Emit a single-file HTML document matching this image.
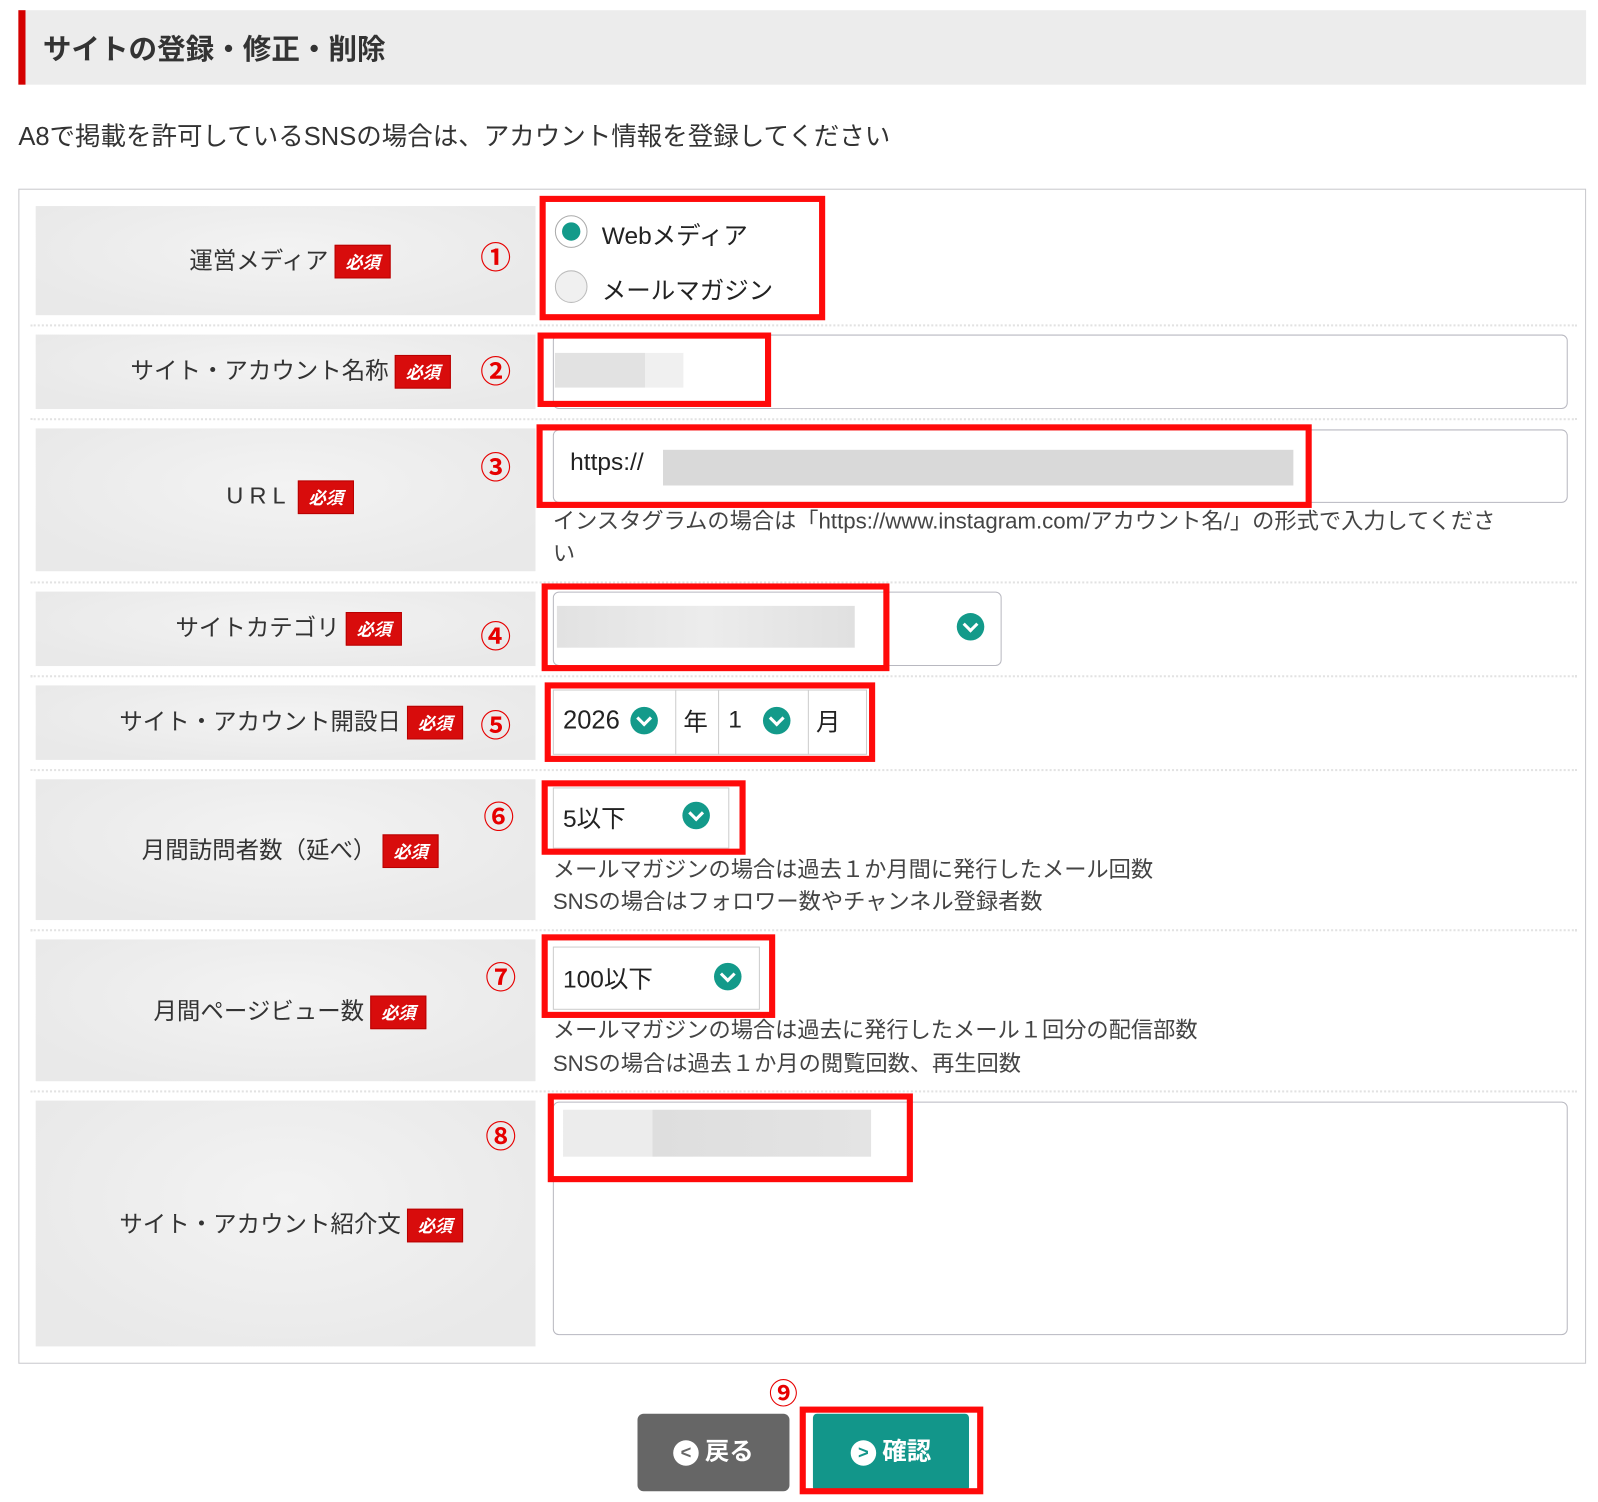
<!DOCTYPE html>
<html><head><meta charset="utf-8"><style>
*{margin:0;padding:0;box-sizing:border-box}
body{width:1598px;height:1502px;background:#fff;overflow:hidden;font-family:"Liberation Sans","Noto Sans CJK JP",sans-serif;color:#333}
#w{position:absolute;left:0;top:0;width:1567px;height:1473px;transform:scale(1.02);transform-origin:0 0}
.a{position:absolute}
.lab{position:absolute;left:35px;width:490px;background:radial-gradient(ellipse at 50% 40%,#f3f3f3,#e9e9e9 80%)}
.lt{position:absolute;font-size:23px;color:#333;white-space:nowrap}
.badge{display:inline-block;background:#d80c0c;color:#fff;font-size:17px;font-weight:bold;font-style:italic;width:55px;height:33px;line-height:33px;text-align:center;vertical-align:middle;margin-left:6px;border:1px solid #b80000}
.num{position:absolute;color:#e60000;font-size:30px;font-weight:bold;left:471px}
.sep{position:absolute;left:30px;width:1516px;border-top:2px dotted #e2e2e2}
.red{position:absolute;border:6px solid #ff0a0a}
.inp{position:absolute;border:1px solid #b8b8c0;border-radius:6px;background:#fff}
.blur{position:absolute;background:#dcdcdc}
.chev{position:absolute;width:27px;height:27px;border-radius:50%;background:#139a8a}
.chev:after{content:"";position:absolute;left:8px;top:6px;width:8px;height:8px;border-right:3px solid #fff;border-bottom:3px solid #fff;transform:rotate(45deg)}
.help{position:absolute;left:542px;font-size:21.8px;color:#444;white-space:nowrap}
.v{position:absolute;font-size:24px;color:#222}
</style></head><body><div id="w">
<div class="a" style="left:18px;top:10px;width:1537px;height:73px;background:#ececec"></div>
<div class="a" style="left:18px;top:10px;width:7px;height:73px;background:#d40000"></div>
<div class="a" style="left:42px;top:27px;font-size:28px;font-weight:bold;color:#333">サイトの登録・修正・削除</div>
<div class="a" style="left:18px;top:114px;font-size:25px;color:#333">A8で掲載を許可しているSNSの場合は、アカウント情報を登録してください</div>
<div class="a" style="left:18px;top:185px;width:1537px;height:1152px;border:1px solid #c8c8cc"></div>

<div class="lab" style="top:202px;height:107px"></div>
<div class="lab" style="top:328px;height:73px"></div>
<div class="lab" style="top:420px;height:140px"></div>
<div class="lab" style="top:580px;height:73px"></div>
<div class="lab" style="top:672px;height:73px"></div>
<div class="lab" style="top:764px;height:138px"></div>
<div class="lab" style="top:921px;height:139px"></div>
<div class="lab" style="top:1079px;height:241px"></div>
<div class="sep" style="top:318px"></div><div class="sep" style="top:410px"></div><div class="sep" style="top:570px"></div><div class="sep" style="top:662px"></div><div class="sep" style="top:754px"></div><div class="sep" style="top:911px"></div><div class="sep" style="top:1069px"></div>

<div class="lt" style="right:1184px;top:236px">運営メディア<span class="badge">必須</span></div>
<div class="lt" style="right:1125px;top:344px">サイト・アカウント名称<span class="badge">必須</span></div>
<div class="lt" style="right:1220px;top:471px;letter-spacing:6px">URL<span class="badge" style="letter-spacing:0">必須</span></div>
<div class="lt" style="right:1173px;top:596px">サイトカテゴリ<span class="badge">必須</span></div>
<div class="lt" style="right:1113px;top:688px">サイト・アカウント開設日<span class="badge">必須</span></div>
<div class="lt" style="right:1137px;top:814px">月間訪問者数（延べ）<span class="badge">必須</span></div>
<div class="lt" style="right:1149px;top:972px">月間ページビュー数<span class="badge">必須</span></div>
<div class="lt" style="right:1113px;top:1181px">サイト・アカウント紹介文<span class="badge">必須</span></div>

<div class="num" style="top:228px">①</div><div class="num" style="top:340px">②</div><div class="num" style="top:434px">③</div><div class="num" style="top:600px">④</div><div class="num" style="top:687px">⑤</div><div class="num" style="top:777px;left:474px">⑥</div><div class="num" style="top:934px;left:476px">⑦</div><div class="num" style="top:1090px;left:476px">⑧</div>

<div class="a" style="left:544px;top:211px;width:32px;height:32px;border-radius:50%;border:1px solid #aaa;background:#fff"><div class="a" style="left:6px;top:6px;width:18px;height:18px;border-radius:50%;background:#139a8a"></div></div>
<div class="a" style="left:544px;top:265px;width:32px;height:32px;border-radius:50%;border:1px solid #bbb;background:#f0f0f0"></div>
<div class="v" style="left:590px;top:211px">Webメディア</div>
<div class="v" style="left:590px;top:265px">メールマガジン</div>

<div class="inp" style="left:542px;top:328px;width:995px;height:73px"></div>
<div class="blur" style="left:544px;top:346px;width:126px;height:34px;background:linear-gradient(90deg,#e2e2e2 70%,#f0f0f0 70%)"></div>
<div class="inp" style="left:542px;top:421px;width:995px;height:72px"></div>
<div class="v" style="left:559px;top:440px">https://</div>
<div class="blur" style="left:650px;top:441px;width:618px;height:35px;background:#d9d9d9"></div>
<div class="help" style="top:494px">インスタグラムの場合は「https://www.instagram.com/アカウント名/」の形式で入力してくださ</div>
<div class="help" style="top:526px">い</div>

<div class="inp" style="left:542px;top:580px;width:440px;height:73px"></div>
<div class="blur" style="left:546px;top:594px;width:292px;height:41px;background:linear-gradient(90deg,#e2e2e2,#ececec 50%,#e0e0e0)"></div>
<div class="chev" style="left:938px;top:601px"></div>

<div class="a" style="left:542px;top:676px;width:308px;height:64px;border:1px solid #ccc"></div>
<div class="a" style="left:662px;top:676px;height:64px;border-left:1px solid #ccc"></div>
<div class="a" style="left:704px;top:676px;height:64px;border-left:1px solid #ccc"></div>
<div class="a" style="left:792px;top:676px;height:64px;border-left:1px solid #ccc"></div>
<div class="v" style="left:552px;top:692px;font-size:25px">2026</div><div class="chev" style="left:618px;top:693px"></div>
<div class="v" style="left:670px;top:688px">年</div>
<div class="v" style="left:714px;top:692px">1</div><div class="chev" style="left:748px;top:693px"></div>
<div class="v" style="left:800px;top:688px">月</div>

<div class="a" style="left:542px;top:772px;width:173px;height:60px;border:1px solid #ccc"></div>
<div class="v" style="left:552px;top:783px">5以下</div><div class="chev" style="left:669px;top:786px"></div>
<div class="help" style="top:836px">メールマガジンの場合は過去１か月間に発行したメール回数</div>
<div class="help" style="top:867px">SNSの場合はフォロワー数やチャンネル登録者数</div>

<div class="a" style="left:542px;top:928px;width:203px;height:62px;border:1px solid #ccc"></div>
<div class="v" style="left:552px;top:940px">100以下</div><div class="chev" style="left:700px;top:944px"></div>
<div class="help" style="top:993px">メールマガジンの場合は過去に発行したメール１回分の配信部数</div>
<div class="help" style="top:1026px">SNSの場合は過去１か月の閲覧回数、再生回数</div>

<div class="inp" style="left:542px;top:1080px;width:995px;height:229px"></div>
<div class="blur" style="left:552px;top:1088px;width:302px;height:46px;background:linear-gradient(90deg,#ececec 29%,#dedede 29%,#e4e4e4)"></div>

<div class="red" style="left:529px;top:192px;width:280px;height:122px"></div>
<div class="red" style="left:527px;top:326px;width:229px;height:73px"></div>
<div class="red" style="left:526px;top:416px;width:760px;height:82px"></div>
<div class="red" style="left:531px;top:572px;width:341px;height:86px"></div>
<div class="red" style="left:534px;top:669px;width:324px;height:78px"></div>
<div class="red" style="left:531px;top:765px;width:200px;height:73px"></div>
<div class="red" style="left:531px;top:916px;width:229px;height:82px"></div>
<div class="red" style="left:537px;top:1072px;width:358px;height:87px"></div>

<div class="a" style="left:754px;top:1345px;color:#e60000;font-size:28px;font-weight:bold">⑨</div>
<div class="a" style="left:625px;top:1386px;width:149px;height:76px;border-radius:6px;background:#666;color:#fff;font-size:24px;font-weight:bold;line-height:76px;text-align:center"><span style="display:inline-block;width:25px;height:25px;border-radius:50%;background:#fff;color:#666;font-size:18px;line-height:25px;vertical-align:middle;margin-right:6px">&lt;</span>戻る</div>
<div class="a" style="left:797px;top:1386px;width:153px;height:76px;border-radius:4px;background:#12968a;color:#fff;font-size:24px;font-weight:bold;line-height:76px;text-align:center"><span style="display:inline-block;width:25px;height:25px;border-radius:50%;background:#fff;color:#12968a;font-size:18px;line-height:25px;vertical-align:middle;margin-right:6px">&gt;</span>確認</div>
<div class="red" style="left:784px;top:1379px;width:180px;height:86px"></div>
</div></body></html>
